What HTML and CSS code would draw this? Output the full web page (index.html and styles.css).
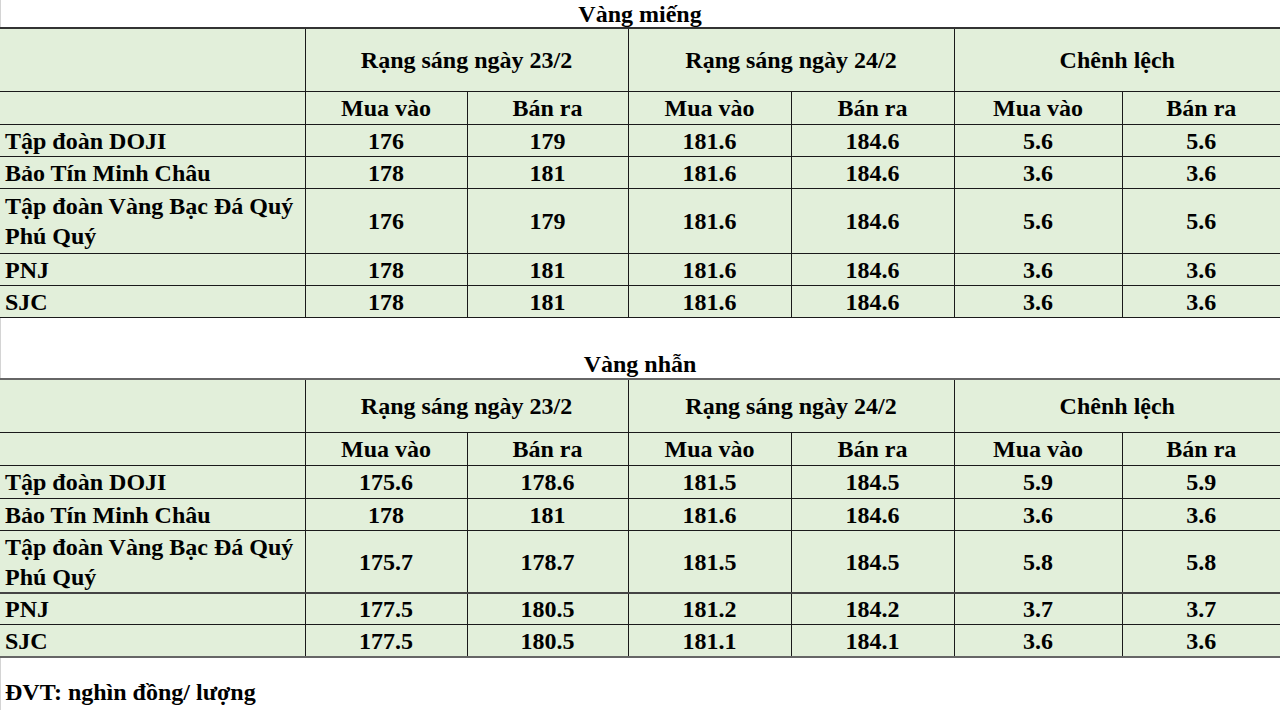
FILE: index.html
```html
<!DOCTYPE html>
<html lang="vi">
<head>
<meta charset="utf-8">
<title>Giá vàng</title>
<link rel="stylesheet" href="styles.css">
</head>
<body>
<div class="page">
  <div class="title t1">Vàng miếng</div>
  <table class="grid g1">
    <colgroup>
      <col class="c-name"><col class="c2"><col class="c3"><col class="c4"><col class="c5"><col class="c6"><col class="c7">
    </colgroup>
    <tr class="h1"><td></td><td colspan="2">Rạng sáng ngày 23/2</td><td colspan="2">Rạng sáng ngày 24/2</td><td colspan="2">Chênh lệch</td></tr>
    <tr class="h2"><td></td><td>Mua vào</td><td>Bán ra</td><td>Mua vào</td><td>Bán ra</td><td>Mua vào</td><td>Bán ra</td></tr>
    <tr class="r32"><td class="name">Tập đoàn DOJI</td><td>176</td><td>179</td><td>181.6</td><td>184.6</td><td>5.6</td><td>5.6</td></tr>
    <tr class="r32"><td class="name">Bảo Tín Minh Châu</td><td>178</td><td>181</td><td>181.6</td><td>184.6</td><td>3.6</td><td>3.6</td></tr>
    <tr class="r65"><td class="name">Tập đoàn Vàng Bạc Đá Quý Phú Quý</td><td>176</td><td>179</td><td>181.6</td><td>184.6</td><td>5.6</td><td>5.6</td></tr>
    <tr class="r32"><td class="name">PNJ</td><td>178</td><td>181</td><td>181.6</td><td>184.6</td><td>3.6</td><td>3.6</td></tr>
    <tr class="r32"><td class="name">SJC</td><td>178</td><td>181</td><td>181.6</td><td>184.6</td><td>3.6</td><td>3.6</td></tr>
  </table>

  <div class="title t2">Vàng nhẫn</div>
  <table class="grid g2">
    <colgroup>
      <col class="c-name"><col class="c2"><col class="c3"><col class="c4"><col class="c5"><col class="c6"><col class="c7">
    </colgroup>
    <tr class="h1b"><td></td><td colspan="2">Rạng sáng ngày 23/2</td><td colspan="2">Rạng sáng ngày 24/2</td><td colspan="2">Chênh lệch</td></tr>
    <tr class="h2"><td></td><td>Mua vào</td><td>Bán ra</td><td>Mua vào</td><td>Bán ra</td><td>Mua vào</td><td>Bán ra</td></tr>
    <tr class="r33"><td class="name">Tập đoàn DOJI</td><td>175.6</td><td>178.6</td><td>181.5</td><td>184.5</td><td>5.9</td><td>5.9</td></tr>
    <tr class="r32"><td class="name">Bảo Tín Minh Châu</td><td>178</td><td>181</td><td>181.6</td><td>184.6</td><td>3.6</td><td>3.6</td></tr>
    <tr class="r63"><td class="name">Tập đoàn Vàng Bạc Đá Quý Phú Quý</td><td>175.7</td><td>178.7</td><td>181.5</td><td>184.5</td><td>5.8</td><td>5.8</td></tr>
    <tr class="r31 thick"><td class="name">PNJ</td><td>177.5</td><td>180.5</td><td>181.2</td><td>184.2</td><td>3.7</td><td>3.7</td></tr>
    <tr class="r32"><td class="name">SJC</td><td>177.5</td><td>180.5</td><td>181.1</td><td>184.1</td><td>3.6</td><td>3.6</td></tr>
  </table>

  <div class="note">ĐVT: nghìn đồng/ lượng</div>
</div>
</body>
</html>
```

FILE: styles.css
```css
html, body {
  margin: 0;
  padding: 0;
  background: #ffffff;
}
body {
  font-family: "Liberation Serif", "Times New Roman", serif;
  font-weight: bold;
  font-size: 24px;
  color: #000;
}
.page {
  width: 1280px;
  height: 710px;
  overflow: hidden;
  box-shadow: inset 1px 0 0 #d4d4d4;
}
.title {
  text-align: center;
  height: 27px;
  line-height: 28px;
}
.t1 { height: 27px; line-height: 28px; }
.t2 { margin-top: 33px; height: 27px; line-height: 26px; }

.grid {
  border-collapse: collapse;
  table-layout: fixed;
  width: 1280px;
  background: #e2efda;
}
.grid td {
  border: 1px solid #1a1a1a;
  padding: 0;
  text-align: center;
  vertical-align: middle;
  line-height: 30px;
}
.grid td:first-child { border-left: none; }
.grid td:last-child { border-right: none; }
.grid tr:first-child td { border-top: 2px solid #333; }
.g2 tr:first-child td { border-top: 2px solid #666; }
.g2 tr:last-child td { border-bottom: 2px solid #666; }
.grid tr.thick td { border-top: 2px solid #444; }

.grid td.name {
  text-align: left;
  padding-left: 5px;
}

.c-name { width: 305px; }
.c2 { width: 162px; }
.c3 { width: 161px; }
.c4 { width: 163px; }
.c5 { width: 163px; }
.c6 { width: 168px; }
.c7 { width: 158px; }

.h1 td { height: 62px; }
.h1b td { height: 52px; }
.h2 td { height: 32px; }
.r31 td { height: 30px; }
.r32 td { height: 31px; }
.r33 td { height: 32px; }
.r65 td { height: 64px; }
.r63 td { height: 61px; }

.note {
  padding-left: 5px;
  margin-top: 19px;
  line-height: 30px;
}
```
